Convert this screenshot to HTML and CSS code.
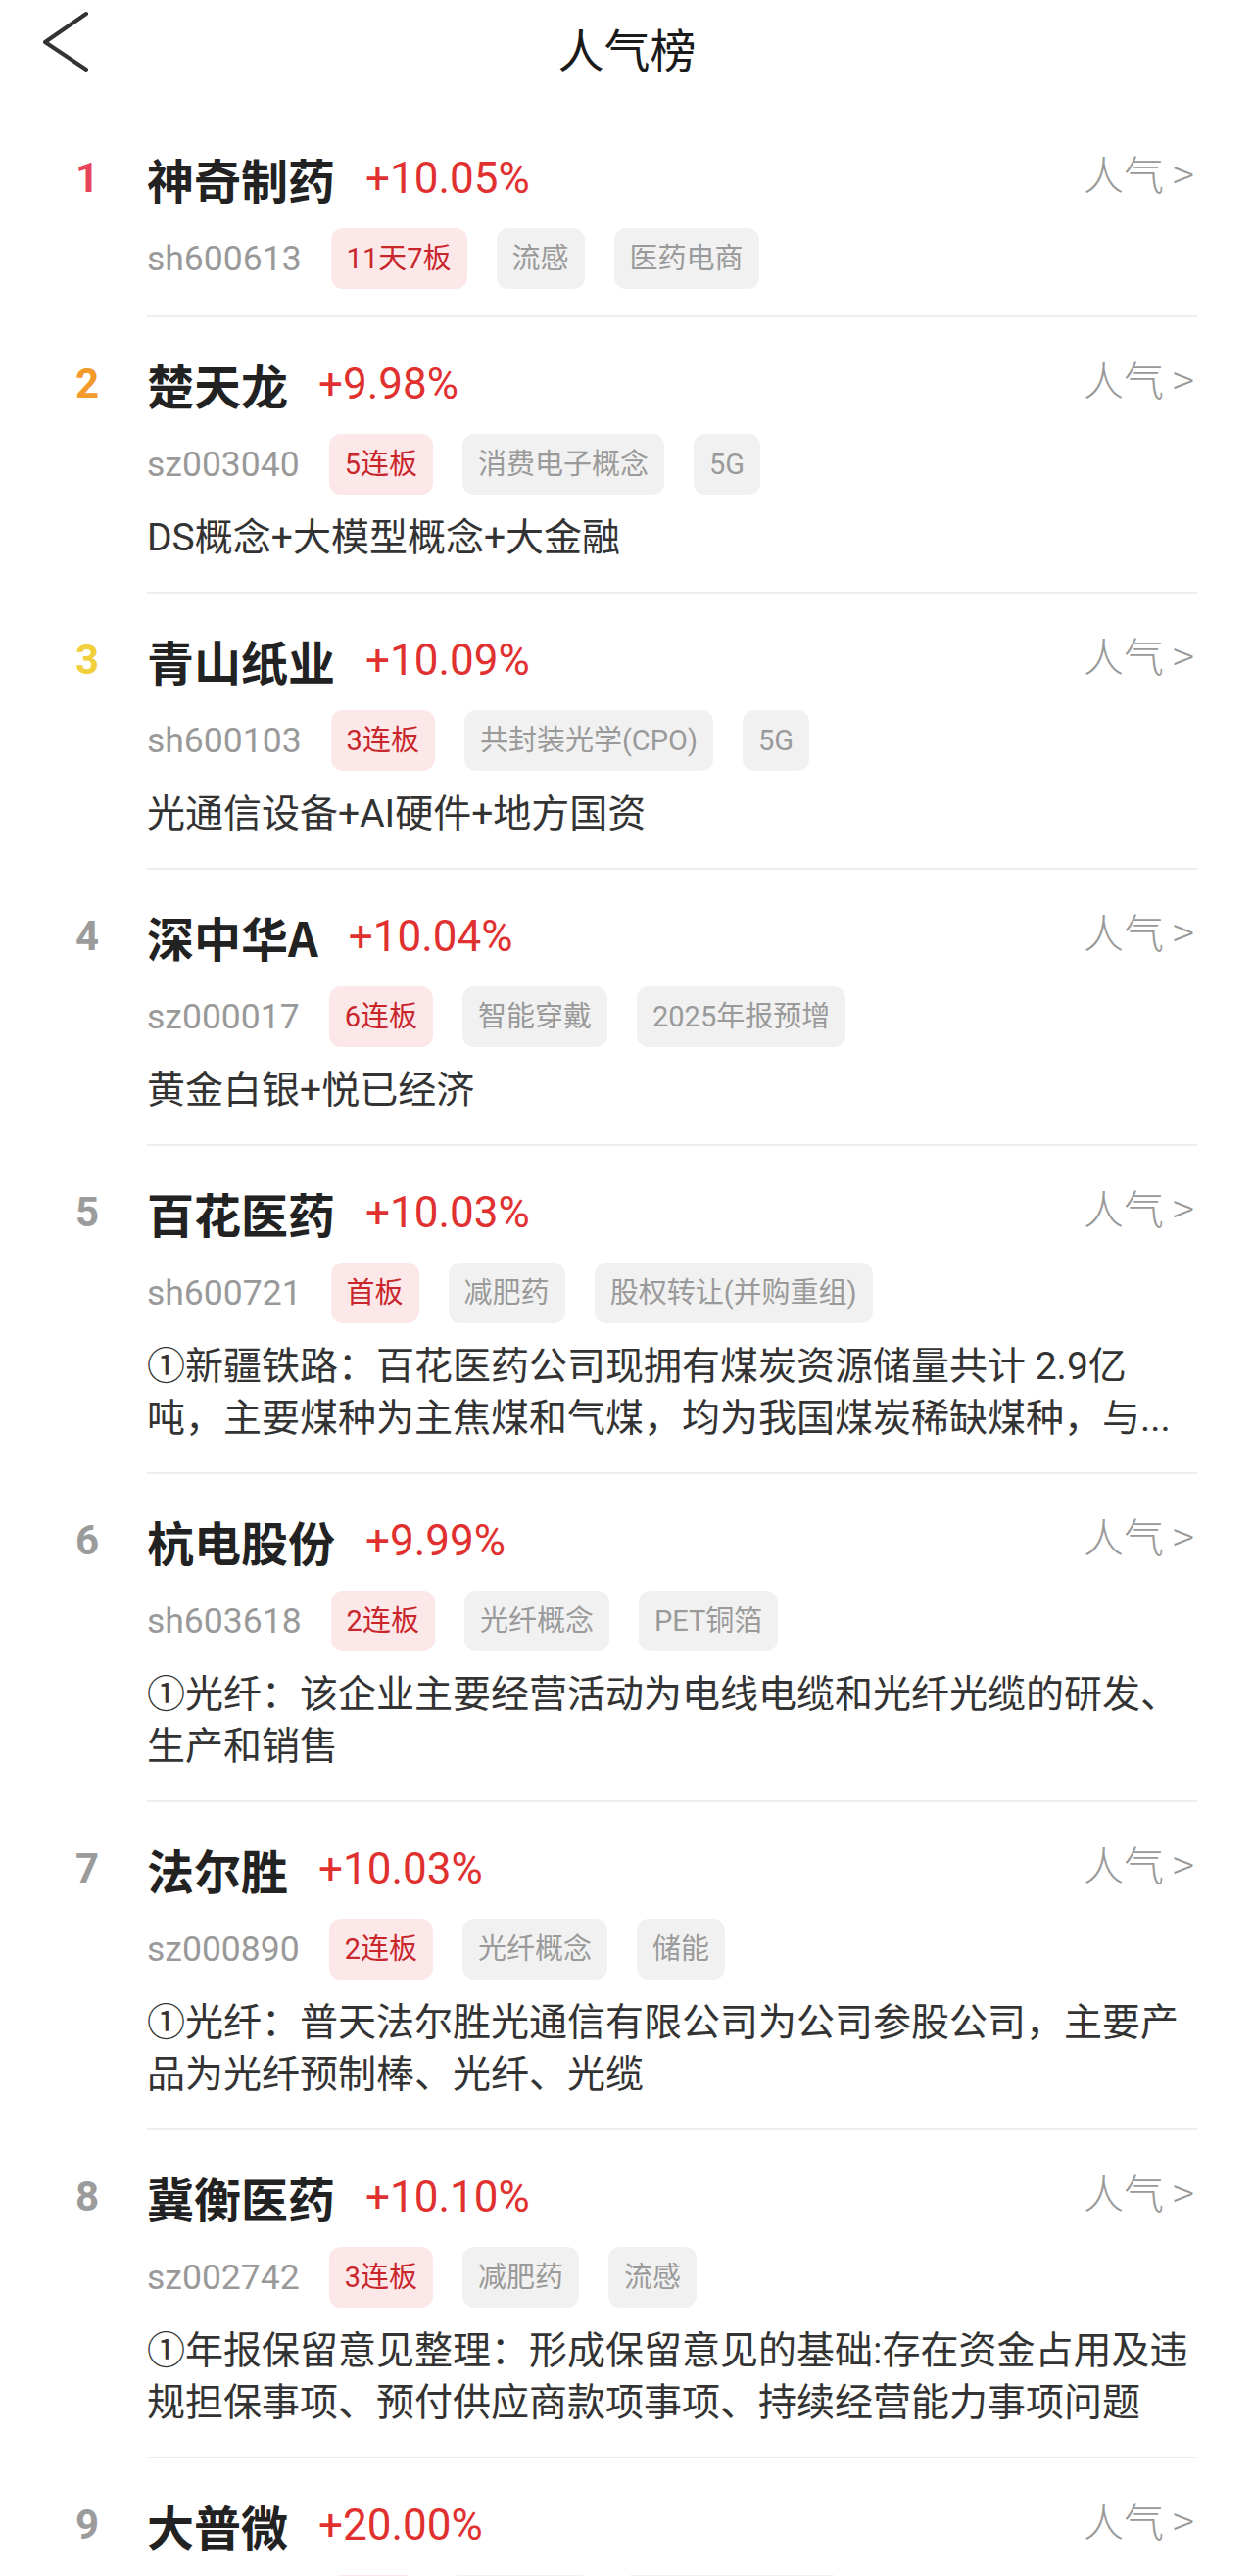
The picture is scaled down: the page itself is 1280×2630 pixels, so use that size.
FILE: index.html
```html
<!DOCTYPE html>
<html lang="zh-CN">
<head>
    <meta charset="UTF-8">
    <meta name="viewport" content="width=device-width, initial-scale=1.0">
    <title>人气榜</title>
    <link rel="stylesheet" href="styles.css">
</head>
<body>
    <div class="header">
        <div class="back">
            <svg width="60" height="96" viewBox="0 0 60 96">
                <polyline points="58,14 16,43 58,71" fill="none" stroke="#333" stroke-width="4" stroke-linecap="round" stroke-linejoin="round"/>
            </svg>
        </div>
        <div class="title">人气榜</div>
        <div></div>
    </div>

    <div class="list">
        <div class="item">
            <div class="rank r1">1</div>
            <div class="body">
                <div class="top">
                    <span class="name">神奇制药</span>
                    <span class="pct">+10.05%</span>
                    <span class="hot">人气 &gt;</span>
                </div>
                <div class="tags">
                    <span class="code">sh600613</span>
                    <span class="tag red">11天7板</span>
                    <span class="tag">流感</span>
                    <span class="tag">医药电商</span>
                </div>
            </div>
        </div>

        <div class="item">
            <div class="rank r2">2</div>
            <div class="body">
                <div class="top">
                    <span class="name">楚天龙</span>
                    <span class="pct">+9.98%</span>
                    <span class="hot">人气 &gt;</span>
                </div>
                <div class="tags">
                    <span class="code">sz003040</span>
                    <span class="tag red">5连板</span>
                    <span class="tag">消费电子概念</span>
                    <span class="tag">5G</span>
                </div>
                <div class="desc">DS概念+大模型概念+大金融</div>
            </div>
        </div>

        <div class="item">
            <div class="rank r3">3</div>
            <div class="body">
                <div class="top">
                    <span class="name">青山纸业</span>
                    <span class="pct">+10.09%</span>
                    <span class="hot">人气 &gt;</span>
                </div>
                <div class="tags">
                    <span class="code">sh600103</span>
                    <span class="tag red">3连板</span>
                    <span class="tag">共封装光学(CPO)</span>
                    <span class="tag">5G</span>
                </div>
                <div class="desc">光通信设备+AI硬件+地方国资</div>
            </div>
        </div>

        <div class="item">
            <div class="rank">4</div>
            <div class="body">
                <div class="top">
                    <span class="name">深中华A</span>
                    <span class="pct">+10.04%</span>
                    <span class="hot">人气 &gt;</span>
                </div>
                <div class="tags">
                    <span class="code">sz000017</span>
                    <span class="tag red">6连板</span>
                    <span class="tag">智能穿戴</span>
                    <span class="tag">2025年报预增</span>
                </div>
                <div class="desc">黄金白银+悦已经济</div>
            </div>
        </div>

        <div class="item">
            <div class="rank">5</div>
            <div class="body">
                <div class="top">
                    <span class="name">百花医药</span>
                    <span class="pct">+10.03%</span>
                    <span class="hot">人气 &gt;</span>
                </div>
                <div class="tags">
                    <span class="code">sh600721</span>
                    <span class="tag red">首板</span>
                    <span class="tag">减肥药</span>
                    <span class="tag">股权转让(并购重组)</span>
                </div>
                <div class="desc">①新疆铁路：百花医药公司现拥有煤炭资源储量共计 2.9亿<br>吨，主要煤种为主焦煤和气煤，均为我国煤炭稀缺煤种，与...</div>
            </div>
        </div>

        <div class="item">
            <div class="rank">6</div>
            <div class="body">
                <div class="top">
                    <span class="name">杭电股份</span>
                    <span class="pct">+9.99%</span>
                    <span class="hot">人气 &gt;</span>
                </div>
                <div class="tags">
                    <span class="code">sh603618</span>
                    <span class="tag red">2连板</span>
                    <span class="tag">光纤概念</span>
                    <span class="tag">PET铜箔</span>
                </div>
                <div class="desc">①光纤：该企业主要经营活动为电线电缆和光纤光缆的研发、<br>生产和销售</div>
            </div>
        </div>

        <div class="item">
            <div class="rank">7</div>
            <div class="body">
                <div class="top">
                    <span class="name">法尔胜</span>
                    <span class="pct">+10.03%</span>
                    <span class="hot">人气 &gt;</span>
                </div>
                <div class="tags">
                    <span class="code">sz000890</span>
                    <span class="tag red">2连板</span>
                    <span class="tag">光纤概念</span>
                    <span class="tag">储能</span>
                </div>
                <div class="desc">①光纤：普天法尔胜光通信有限公司为公司参股公司，主要产<br>品为光纤预制棒、光纤、光缆</div>
            </div>
        </div>

        <div class="item">
            <div class="rank">8</div>
            <div class="body">
                <div class="top">
                    <span class="name">冀衡医药</span>
                    <span class="pct">+10.10%</span>
                    <span class="hot">人气 &gt;</span>
                </div>
                <div class="tags">
                    <span class="code">sz002742</span>
                    <span class="tag red">3连板</span>
                    <span class="tag">减肥药</span>
                    <span class="tag">流感</span>
                </div>
                <div class="desc">①年报保留意见整理：形成保留意见的基础:存在资金占用及违<br>规担保事项、预付供应商款项事项、持续经营能力事项问题</div>
            </div>
        </div>

        <div class="item">
            <div class="rank">9</div>
            <div class="body">
                <div class="top">
                    <span class="name">大普微</span>
                    <span class="pct">+20.00%</span>
                    <span class="hot">人气 &gt;</span>
                </div>
                <div class="tags">
                    <span class="code">sz301666</span>
                    <span class="tag red">首板</span>
                    <span class="tag">存储芯片</span>
                    <span class="tag">国产芯片(新股)</span>
                </div>
            </div>
        </div>
    </div>
</body>
</html>
```

FILE: styles.css
```css
body {
    margin: 0;
    background-color: #fff;
    color: #222;
    font-family: Roboto, "Noto Sans CJK SC", sans-serif;
}

.header {
    height: 96px;
    display: grid;
    grid-template-columns: 1fr auto 1fr;
    align-items: center;
}

.back {
    padding-left: 30px;
    height: 96px;
}

.back svg {
    display: block;
}

.title {
    font-size: 47px;
    color: #1a1a1a;
    font-family: "Noto Sans CJK SC", sans-serif;
}

.list {
    padding: 18px 58px 0 54px;
}

.item {
    display: flex;
}

.rank {
    width: 70px;
    padding-top: 40px;
    line-height: 56px;
    text-align: center;
    font-size: 42px;
    font-weight: bold;
    color: #9b9b9b;
}

.r1 {
    color: #e8435a;
}

.r2 {
    color: #f39a2d;
}

.r3 {
    color: #f2cf3c;
}

.body {
    flex: 1;
    margin-left: 26px;
    padding: 40px 0 28px;
    border-bottom: 2px solid #eeeeee;
}

.top {
    display: flex;
    align-items: center;
    height: 56px;
}

.name {
    font-size: 48px;
    font-weight: bold;
    color: #222;
    font-family: "Noto Sans CJK SC", sans-serif;
}

.pct {
    margin-left: 31px;
    font-size: 44px;
    color: #e0302f;
}

.hot {
    margin-left: auto;
    margin-right: 3px;
    align-self: flex-start;
    line-height: 44px;
    font-size: 41px;
    color: #999;
    font-family: "Noto Sans CJK SC", sans-serif;
    font-weight: 300;
}

.tags {
    display: flex;
    align-items: center;
    gap: 30px;
    margin-top: 23px;
    height: 61px;
}

.code {
    font-size: 35.5px;
    color: #999;
}

.tag {
    height: 62px;
    line-height: 62px;
    padding: 0 16px;
    border-radius: 12px;
    background-color: #f1f1f1;
    color: #9a9a9a;
    font-size: 29px;
}

.tag.red {
    background-color: #fde8e9;
    color: #c9262c;
}

.desc {
    margin-top: 19px;
    font-size: 39px;
    line-height: 53px;
    color: #333;
}
```
